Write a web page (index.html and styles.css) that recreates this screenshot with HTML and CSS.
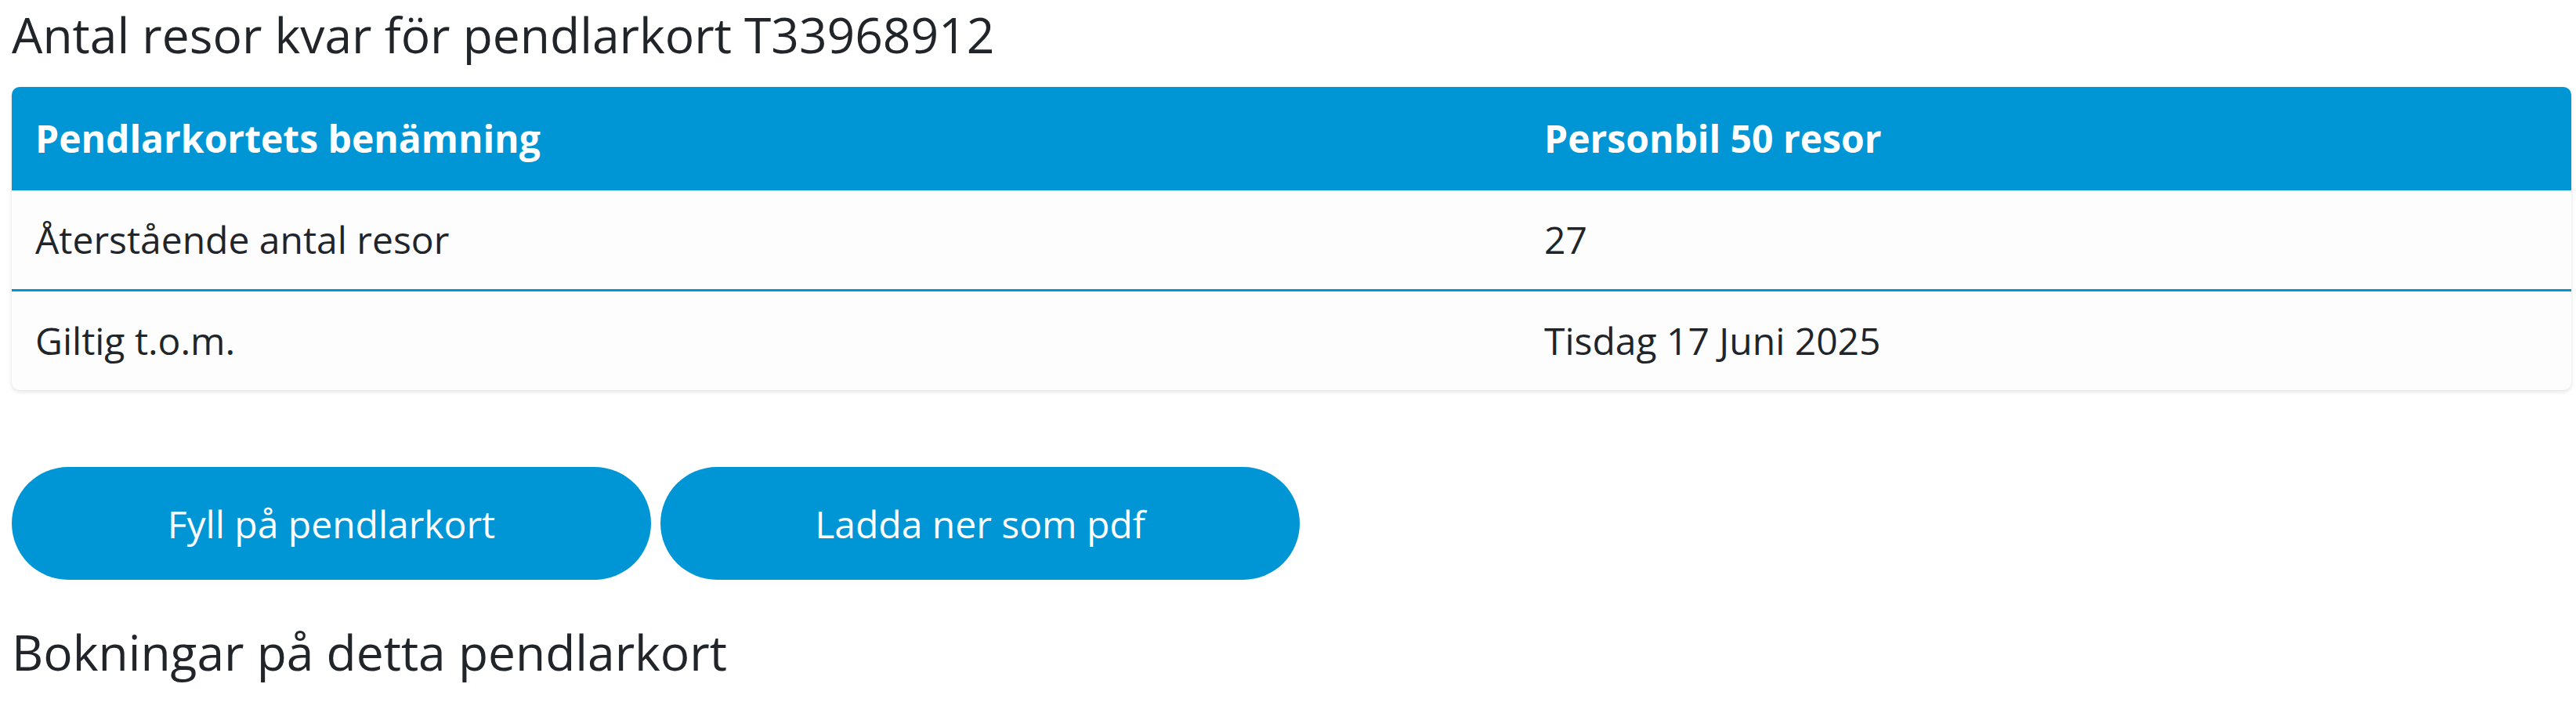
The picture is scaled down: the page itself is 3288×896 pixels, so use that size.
FILE: index.html
```html
<!DOCTYPE html>
<html lang="sv">
<head>
<meta charset="utf-8">
<title>Pendlarkort</title>
<link rel="stylesheet" href="styles.css">
</head>
<body>
<main class="page">
  <h2 class="title">Antal resor kvar för pendlarkort T33968912</h2>
  <div class="card">
    <div class="row row-head">
      <div class="cell">Pendlarkortets benämning</div>
      <div class="cell">Personbil 50 resor</div>
    </div>
    <div class="row row-body row-sep">
      <div class="cell">Återstående antal resor</div>
      <div class="cell">27</div>
    </div>
    <div class="row row-body">
      <div class="cell">Giltig t.o.m.</div>
      <div class="cell">Tisdag 17 Juni 2025</div>
    </div>
  </div>
  <div class="actions">
    <button class="btn" type="button">Fyll på pendlarkort</button>
    <button class="btn" type="button">Ladda ner som pdf</button>
  </div>
  <h2 class="title title-sub">Bokningar på detta pendlarkort</h2>
</main>
</body>
</html>
```
FILE: styles.css
```css
html, body {
  margin: 0;
  padding: 0;
  background: #ffffff;
}
body {
  font-family: "Open Sans", "Noto Sans", sans-serif;
  color: #212529;
  font-size: 48px;
}
.page {
  padding: 0 6px 0 15px;
}
.title {
  margin: 0;
  padding-top: 2px;
  font-size: 62.3px;
  font-weight: 400;
  line-height: 84px;
  color: #212529;
}
.card {
  margin-top: 25px;
  border-radius: 10px;
  background: #fdfdfd;
  box-shadow: 0 2px 5px rgba(0, 0, 0, 0.12);
  overflow: hidden;
}
.row {
  display: grid;
  grid-template-columns: 1926px 1fr;
}
.row-head {
  background: #0096d6;
  color: #ffffff;
  font-weight: 700;
}
.row-head .cell {
  height: 132px;
}
.row-body .cell {
  height: 126px;
}
.row-sep {
  border-bottom: 3px solid #0096d6;
}
.cell {
  display: flex;
  align-items: center;
  padding: 0 30px;
  line-height: 1.5;
}
.actions {
  display: flex;
  gap: 12px;
  margin-top: 98px;
}
.btn {
  width: 816px;
  height: 144px;
  border: 0;
  border-radius: 72px;
  background: #0096d6;
  color: #ffffff;
  font-family: "Open Sans", "Noto Sans", sans-serif;
  font-size: 48px;
  font-weight: 400;
  padding: 0;
}
.title-sub {
  margin-top: 50px;
  padding-top: 0;
}
```
